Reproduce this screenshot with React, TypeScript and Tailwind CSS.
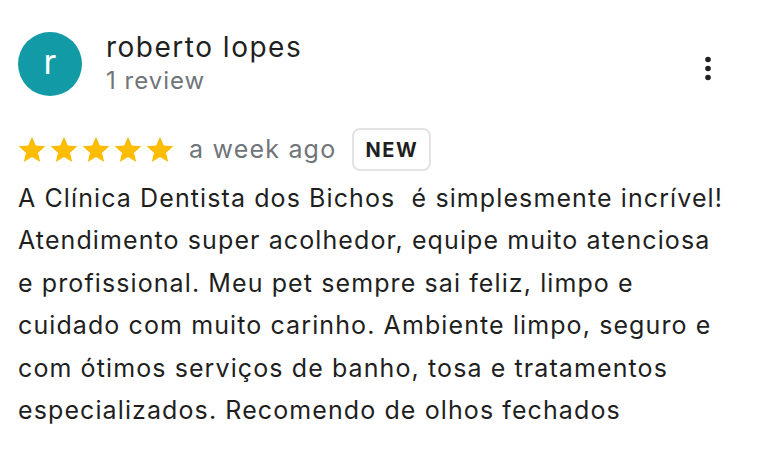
import { useState } from "react";

const STAR = "M12 17.27L18.18 21l-1.64-7.03L22 9.24l-7.19-.61L12 2 9.19 8.63 2 9.24l5.46 4.73L5.82 21z";

const lines = [
  "A Clínica Dentista dos Bichos  é simplesmente incrível!",
  "Atendimento super acolhedor, equipe muito atenciosa",
  "e profissional. Meu pet sempre sai feliz, limpo e",
  "cuidado com muito carinho. Ambiente limpo, seguro e",
  "com ótimos serviços de banho, tosa e tratamentos",
  "especializados. Recomendo de olhos fechados",
];

function Stars({ count }: { count: number }) {
  return (
    <div className="flex gap-[4px]">
      {Array.from({ length: count }).map((_, i) => (
        <svg key={i} width="28" height="28" viewBox="1.5 1.5 21 21">
          <path d={STAR} fill="#fbbc04" />
        </svg>
      ))}
    </div>
  );
}

export default function App() {
  const [menuOpen, setMenuOpen] = useState(false);

  return (
    <div
      className="w-[762px] h-[450px] bg-white text-[#1f1f1f] px-[18px] pt-[32px]"
      style={{ fontFamily: "Inter, Roboto, 'Liberation Sans', sans-serif" }}
    >
      {/* Reviewer header */}
      <div className="flex items-start">
        <div className="w-16 h-16 rounded-full bg-[#129ba7] flex items-center justify-center shrink-0">
          <span className="text-white text-[34px] leading-none -mt-[4px]">r</span>
        </div>
        <div className="ml-6 flex-1 -mt-[4px]">
          <div className="text-[28px] leading-[38px] tracking-[1.5px] text-[#1f1f1f]">roberto lopes</div>
          <div className="text-[24px] leading-[30px] tracking-[1px] text-[#70757a]">1 review</div>
        </div>
        <button
          onClick={() => setMenuOpen(!menuOpen)}
          className="mt-[22px] mr-[29px] w-[14px] h-[30px] flex items-center justify-center"
        >
          <svg width="8" height="26" viewBox="0 0 8 26">
            <circle cx="4" cy="3.5" r="2.8" fill="#202124" />
            <circle cx="4" cy="12.5" r="2.8" fill="#202124" />
            <circle cx="4" cy="21.5" r="2.8" fill="#202124" />
          </svg>
        </button>
      </div>

      {/* Rating row */}
      <div className="flex items-center mt-[32px]">
        <Stars count={5} />
        <span className="ml-[15px] text-[25px] tracking-[1.2px] text-[#70757a]">a week ago</span>
        <span className="ml-[16px] h-[43px] w-[79px] rounded-[8px] border-2 border-[#e3e3e3] flex items-center justify-center text-[20px] font-bold tracking-[1.5px] text-[#1f1f1f]">
          NEW
        </span>
      </div>

      {/* Review body */}
      <div className="mt-[6px] text-[25px] leading-[42.4px] tracking-[1.1px] text-[#1f1f1f] whitespace-pre">
        {lines.map((l, i) => (
          <div key={i}>{l}</div>
        ))}
      </div>
    </div>
  );
}
